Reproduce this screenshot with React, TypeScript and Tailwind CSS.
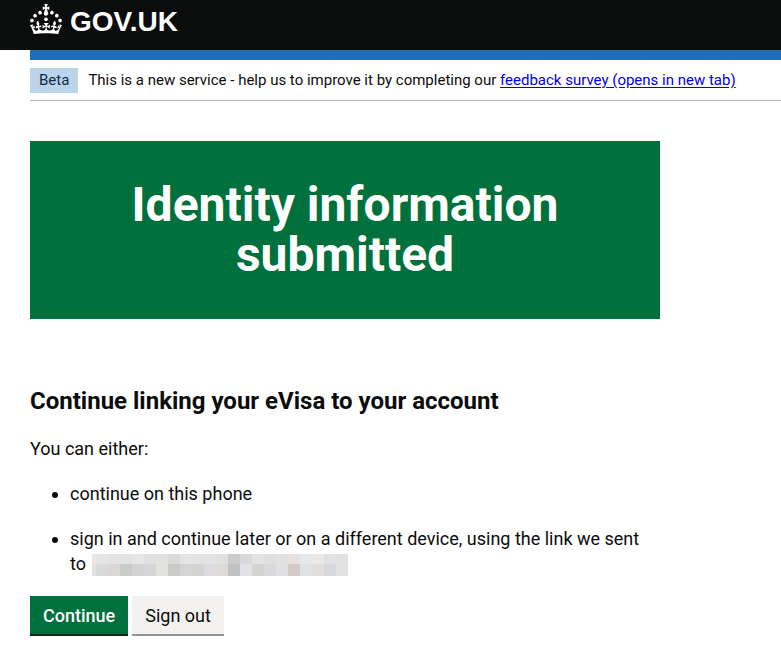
import React from 'react';

const redactedTop = [
  '#e8e8e8', '#e5e5e8', '#e4e2e3', '#e1e3e5', '#e6e6e6', '#e0e0e3', '#e1e1e2', '#dad9d7',
  '#e3e5e4', '#e3e3e3', '#e3e3e3', '#e2e0de', '#c9cccb', '#d7d8da', '#e3e3e4', '#e0dede',
  '#e1e1e1', '#e7e2df', '#e6e9ec', '#ebe9e7', '#e1e2e4', '#e1e1e1',
];

const redactedBottom = [
  '#e2e2e2', '#d9dadb', '#dad6d3', '#cacccb', '#d3d3d3', '#d6d3d9', '#e0e2dc', '#cacac9',
  '#d3d4d3', '#d3d3d1', '#dcdbe1', '#dedad8', '#bfc1c2', '#e0e2e7', '#d3d4cf', '#dadadc',
  '#e0e0e2', '#d2cbc8', '#dee3e6', '#e1dedb', '#d5d7dc', '#e2e0e1',
];

const CrownLogo: React.FC = () => (
  <svg width="32" height="30" viewBox="0 0 32 30" fill="currentColor" aria-hidden="true">
    <path d="M22.6 10.4c-1 .4-2-.1-2.4-1-.4-.9.1-2 1-2.4.9-.4 2 .1 2.4 1s-.1 2-1 2.4m-5.9 6.7c-.9.4-2-.1-2.4-1-.4-.9.1-2 1-2.4.9-.4 2 .1 2.4 1s-.1 2-1 2.4m10.8-3.7c-1 .4-2-.1-2.4-1-.4-.9.1-2 1-2.4.9-.4 2 .1 2.4 1s0 2-1 2.4m3.3 4.8c-1 .4-2-.1-2.4-1-.4-.9.1-2 1-2.4.9-.4 2 .1 2.4 1s-.1 2-1 2.4M17 4.7l2.3 1.2V2.5l-2.3.7-.2-.2.9-3h-3.4l.9 3-.2.2c-.1.1-2.3-.7-2.3-.7v3.4L15 4.7c.1.1.1.2.2.2l-1.3 4c-.1.2-.1.4-.1.6 0 1.1.8 2 1.9 2.2h.7c1-.2 1.9-1.1 1.9-2.1 0-.2 0-.4-.1-.6l-1.3-4c-.1-.2 0-.2.1-.3m-7.6 5.7c.9.4 2-.1 2.4-1 .4-.9-.1-2-1-2.4-.9-.4-2 .1-2.4 1s0 2 1 2.4m-5 3c.9.4 2-.1 2.4-1 .4-.9-.1-2-1-2.4-.9-.4-2 .1-2.4 1s.1 2 1 2.4m-3.2 4.8c.9.4 2-.1 2.4-1 .4-.9-.1-2-1-2.4-.9-.4-2 .1-2.4 1s0 2 1 2.4m14.8 11c4.4 0 8.6.3 12.3.8 1.1-4.5 2.4-7 3.7-8.8l-2.5-.9c.2 1.3.3 1.9 0 2.7-.4-.4-.8-1.1-1.1-2.3l-1.2 4c.7-.5 1.3-.8 2-.9-1.1 2.5-2.6 3.1-3.5 3-1.1-.2-1.7-1.2-1.5-2.1.3-1.2 1.5-1.5 2.1-.1 1.1-2.3-.8-3-2-2.3 1.9-1.9 2.1-3.5.6-5.6-2.1 1.6-2.1 3.2-1.2 5.5-1.2-1.4-3.2-.6-2.5 1.6.9-1.4 2.1-.5 1.9.8-.2 1.1-1.7 2.1-3.5 1.9-2.7-.2-2.9-2.1-2.9-3.6.7-.1 1.9.5 2.9 1.9l.4-4.3c-1.1 1.1-2.1 1.4-3.2 1.4.4-1.2 2.1-3 2.1-3h-5.4s1.7 1.9 2.1 3c-1.1 0-2.1-.2-3.2-1.4l.4 4.3c1-1.4 2.2-2 2.9-1.9-.1 1.5-.2 3.4-2.9 3.6-1.9.2-3.4-.8-3.5-1.9-.2-1.3 1-2.2 1.9-.8.7-2.3-1.2-3-2.5-1.6.9-2.2.9-3.9-1.2-5.5-1.5 2-1.3 3.7.6 5.6-1.2-.7-3.1 0-2 2.3.6-1.4 1.8-1.1 2.1.1.2.9-.3 1.9-1.5 2.1-.9.2-2.4-.5-3.5-3 .6 0 1.2.3 2 .9l-1.2-4c-.3 1.1-.7 1.9-1.1 2.3-.3-.8-.2-1.4 0-2.7l-2.9.9C1.3 23 2.6 25.5 3.7 30c3.7-.5 7.9-.8 12.3-.8" />
  </svg>
);

const Header: React.FC = () => (
  <header>
    <div className="flex h-[50px] items-start bg-[#0b0c0c] pl-[30px] pt-1">
      <a href="#" className="flex items-start gap-2 text-white">
        <CrownLogo />
        <span className="font-['Liberation_Sans',sans-serif] text-[28px] font-bold leading-[36px]">GOV.UK</span>
      </a>
    </div>
    <div className="ml-[30px] h-[10px] bg-[#1d70b8]" />
  </header>
);

const PhaseBanner: React.FC = () => (
  <div className="ml-[30px] flex items-start gap-[10px] border-b border-[#b1b4b6] pb-[7px] pt-2 text-[15px] leading-[25px]">
    <strong className="bg-[#bbd4ea] px-[9px] font-normal text-[#0c2d4a]">Beta</strong>
    <span>
      This is a new service - help us to improve it by completing our{' '}
      <a href="#" className="text-[#0000ee] underline underline-offset-2">
        feedback survey (opens in new tab)
      </a>
    </span>
  </div>
);

// Pixelated block covering the private contact details
const Redacted: React.FC = () => (
  <span className="ml-0.5 inline-flex flex-col align-middle" role="img" aria-label="Redacted">
    {[redactedTop, redactedBottom].map((row, rowIdx) => (
      <span key={rowIdx} className="flex">
        {row.map((color, idx) => (
          <span
            key={idx}
            className={`${idx === 0 ? 'w-1' : 'w-3'} ${rowIdx === 0 ? 'h-[10px]' : 'h-3'}`}
            style={{ backgroundColor: color }}
          />
        ))}
      </span>
    ))}
  </span>
);

const App: React.FC = () => {
  return (
    <div className="bg-white font-['Roboto',sans-serif] text-[#0b0c0c]">
      <Header />
      <PhaseBanner />
      <main className="max-w-[690px] px-[30px] pb-[18px] pt-10 text-[18px] leading-[25px]">
        <div className="bg-[#00703c] px-10 py-[39px] text-center text-white">
          <h1 className="text-[48px] font-bold leading-[50px]">
            Identity information
            <br />
            submitted
          </h1>
        </div>

        <h2 className="mt-[67px] text-[24px] font-bold leading-[30px]">
          Continue linking your eVisa to your account
        </h2>
        <p className="mt-5">You can either:</p>
        <ul className="mt-5 list-disc space-y-5 pl-10 pr-2">
          <li>continue on this phone</li>
          <li>
            sign in and continue later or on a different device, using the link we sent to <Redacted />
          </li>
        </ul>

        <div className="mt-5 flex gap-1">
          <button type="button" className="h-10 border-b-2 border-[#002d18] bg-[#00703c] px-[13px] font-medium text-white">
            Continue
          </button>
          <button type="button" className="h-10 border-b-2 border-[#929191] bg-[#f3f2f1] px-[13px]">
            Sign out
          </button>
        </div>
      </main>
    </div>
  );
};

export default App;
